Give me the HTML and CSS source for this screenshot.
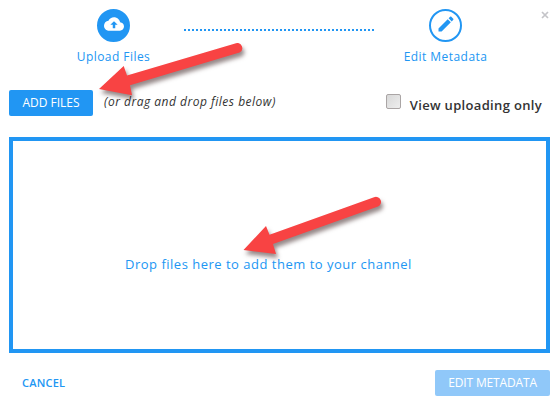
FILE: index.html
```html
<!DOCTYPE html>
<html lang="en">
<head>
<meta charset="utf-8">
<title>Upload Files</title>
<link rel="stylesheet" href="styles.css">
</head>
<body>
<main class="dialog">
  <header class="steps">
    <div class="step">
      <span class="badge badge-active">
        <svg width="20" height="20" viewBox="0 0 24 24"><path fill="#fff" d="M19.35 10.04C18.67 6.59 15.64 4 12 4 9.11 4 6.6 5.64 5.35 8.04 2.34 8.36 0 10.91 0 14c0 3.31 2.69 6 6 6h13c2.76 0 5-2.24 5-5 0-2.64-2.05-4.78-4.65-4.96zM13.5 13v4h-3v-4H7.6L12 8.6l4.4 4.4z"/></svg>
      </span>
      <span class="step-label">Upload Files</span>
    </div>
    <svg class="dots" width="192" height="2" viewBox="0 0 192 2"><path d="M0 1H192" stroke="#2196f3" stroke-width="2" stroke-dasharray="2 2"/></svg>
    <div class="step">
      <span class="badge">
        <svg width="20" height="20" viewBox="0 0 24 24"><path fill="#2196f3" d="M3 17.25V21h3.75L17.81 9.94l-3.75-3.75L3 17.25zM20.71 7.04c.39-.39.39-1.02 0-1.41l-2.34-2.34c-.39-.39-1.02-.39-1.41 0l-1.83 1.83 3.75 3.75 1.83-1.83z"/></svg>
      </span>
      <span class="step-label step-label-edit">Edit Metadata</span>
    </div>
  </header>
  <button class="close" aria-label="Close"><svg width="8" height="8" viewBox="0 0 8 8"><path d="M1 1l6 6M7 1L1 7" stroke="#c4c4c8" stroke-width="1.7"/></svg></button>
  <section class="toolbar">
    <button class="button add">ADD FILES</button>
    <em class="hint">(or drag and drop files below)</em>
    <label class="filter"><span class="checkbox"></span><span class="filter-text">View uploading only</span></label>
  </section>
  <section class="dropzone"><span>Drop files here to add them to your channel</span></section>
  <footer class="actions">
    <button class="cancel">CANCEL</button>
    <button class="button edit" disabled>EDIT METADATA</button>
  </footer>
  <svg class="arrows" width="557" height="406" viewBox="0 0 557 406">
    <g fill="#f84343">
      <path d="M99 89L123.700 66L127 75.500L236 43.200A5 5 0 0 1 239.500 52.500L130 85.300L132 95.300Z"/>
      <path d="M243.500 250L266 226L269.500 234.800L374 197.300A5 5 0 0 1 378 206.500L273 244L276 254Z"/>
    </g>
  </svg>
</main>
</body>
</html>
```
FILE: styles.css
```css
* { box-sizing: border-box; }

body {
  margin: 0;
  background: #fff;
  color: #333;
  font-family: "Open Sans", "Noto Sans", sans-serif;
  overflow: hidden;
}

button {
  border: 0;
  padding: 0;
  background: none;
  font: inherit;
}

.dialog {
  position: relative;
  width: 557px;
  height: 406px;
  padding: 9px 7px 0 9px;
}

.steps {
  display: flex;
  height: 81px;
  padding-left: 54px;
}

.step {
  display: flex;
  flex-direction: column;
  align-items: center;
  width: 101px;
}

.badge {
  display: flex;
  align-items: center;
  justify-content: center;
  width: 33px;
  height: 33px;
  border: 2px solid #2196f3;
  border-radius: 50%;
}

.badge-active { background: #2196f3; }

.badge svg { margin-top: -3px; }

.step-label {
  margin-top: 6px;
  color: #2196f3;
  font-size: 12px;
  line-height: 18px;
  letter-spacing: 0.45px;
  white-space: nowrap;
}

.dots { margin: 20px 19px 0 20px; }

.close {
  position: absolute;
  top: 11px;
  right: 8px;
  display: flex;
}

.toolbar {
  display: flex;
  height: 47px;
}

.button {
  height: 26px;
  border-radius: 2px;
  background: #2196f3;
  color: #fff;
  font-size: 12px;
  line-height: 26px;
}

.add { width: 84px; }

.hint {
  margin-left: 11px;
  font-size: 12px;
  line-height: 24px;
  letter-spacing: 0.5px;
  white-space: nowrap;
}

.filter {
  display: flex;
  margin-left: auto;
  padding-right: 8px;
}

.checkbox {
  width: 15px;
  height: 15px;
  margin: 4px 9px 0 0;
  border: 1px solid #aaa5a5;
  border-radius: 2px;
  background: linear-gradient(135deg, #d8d8d8, #eee);
}

.filter-text {
  font-size: 13px;
  font-weight: 600;
  line-height: 31px;
  letter-spacing: 0.33px;
  white-space: nowrap;
}

.dropzone {
  height: 216px;
  border: 4px solid #2196f3;
  padding: 113px 0 0 112px;
  color: #2196f3;
  font-size: 13px;
  line-height: 20px;
  letter-spacing: 0.5px;
  white-space: nowrap;
}

.actions {
  display: flex;
  justify-content: space-between;
  padding: 17px 0 0 13px;
}

.cancel {
  height: 25px;
  color: #2196f3;
  font-size: 11px;
  font-weight: 600;
  letter-spacing: 0.2px;
}

.edit {
  width: 115px;
  background: #90c8f9;
  letter-spacing: -0.15px;
}

.arrows {
  position: absolute;
  inset: 0;
  pointer-events: none;
}

.arrows g { filter: drop-shadow(2px 4px 2px rgba(45, 20, 20, 0.5)); }
```
